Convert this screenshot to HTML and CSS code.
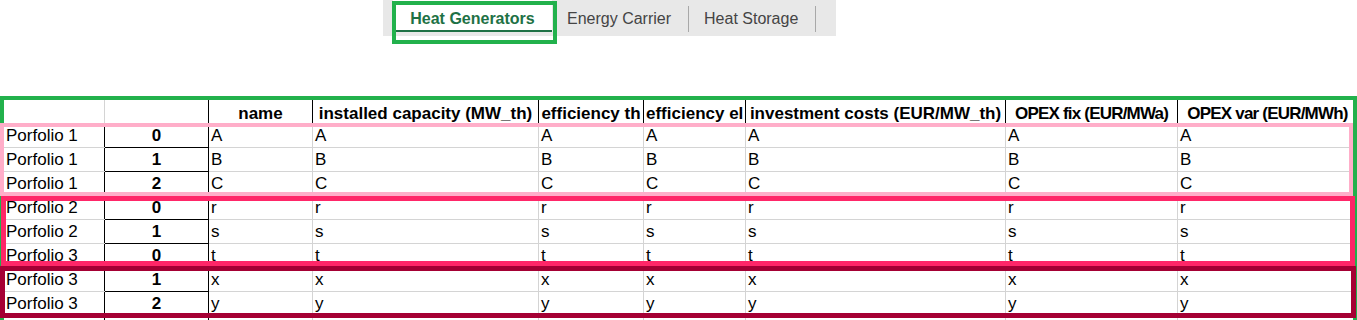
FILE: index.html
```html
<!DOCTYPE html>
<html lang="en">

<head>
    <meta charset="UTF-8">
    <title>Heat Generators</title>
    <link rel="stylesheet" href="styles.css">
</head>

<body>

    <div class="tabbar">
        <div class="tab active">Heat Generators</div>
        <div class="tab">Energy Carrier</div>
        <div class="tab">Heat Storage</div>
        <div class="mark mark-tab"></div>
    </div>

    <div class="sheet">
        <table class="grid">
            <colgroup>
                <col class="w-a">
                <col class="w-b">
                <col class="w-c">
                <col class="w-d">
                <col class="w-e">
                <col class="w-f">
                <col class="w-g">
                <col class="w-h">
                <col class="w-i">
            </colgroup>
            <thead>
                <tr>
                    <th class="corner"></th>
                    <th class="idx-head"></th>
                    <th>name</th>
                    <th>installed capacity (MW_th)</th>
                    <th>efficiency th</th>
                    <th>efficiency el</th>
                    <th>investment costs (EUR/MW_th)</th>
                    <th class="tight">OPEX fix (EUR/MWa)</th>
                    <th class="tight">OPEX var (EUR/MWh)</th>
                </tr>
            </thead>
            <tbody id="rows"></tbody>
        </table>

        <!-- highlight frames drawn over the grid -->
        <div class="mark mark-all"></div>
        <div class="mark mark-p1"></div>
        <div class="mark mark-p2"></div>
        <div class="mark mark-p3"></div>
    </div>

    <script>
        const data = [
            ['Porfolio 1', 0, 'A'],
            ['Porfolio 1', 1, 'B'],
            ['Porfolio 1', 2, 'C'],
            ['Porfolio 2', 0, 'r'],
            ['Porfolio 2', 1, 's'],
            ['Porfolio 3', 0, 't'],
            ['Porfolio 3', 1, 'x'],
            ['Porfolio 3', 2, 'y'],
            ['', '', '']
        ];

        const body = document.getElementById('rows');
        data.forEach(([portfolio, idx, val]) => {
            const tr = document.createElement('tr');
            let html = `<td class="label">${portfolio}</td><td class="idx">${idx}</td>`;
            for (let i = 0; i < 7; i++) {
                html += `<td>${val}</td>`;
            }
            tr.innerHTML = html;
            body.appendChild(tr);
        });
    </script>

</body>

</html>
```

FILE: styles.css
```css
body {
    margin: 0;
    font-family: "Liberation Sans", Arial, sans-serif;
    background-color: #fff;
    color: #000;
    overflow: hidden;
}

/* sheet tabs */
.tabbar {
    position: relative;
    display: flex;
    align-items: flex-start;
    margin-left: 383px;
    width: 453px;
    height: 36px;
    background-color: #e8e8e8;
}

.tab {
    font-size: 16px;
    color: #444;
    padding: 8px 18px 0 15px;
    line-height: 22px;
    height: 30px;
    box-sizing: border-box;
    position: relative;
}

.tab::after {
    content: "";
    position: absolute;
    right: 0;
    top: 6px;
    height: 26px;
    border-right: 1px solid #a8a8a8;
}

.tab:last-of-type {
    padding-left: 16px;
    padding-right: 20px;
}

.tab.active {
    margin-left: 10px;
    width: 159px;
    padding: 8px 0 0;
    text-align: center;
    height: 32px;
    background-color: #fff;
    color: #1e7145;
    font-weight: bold;
    border-bottom: 2px solid #1e7145;
}

.tab.active::after {
    right: -2px;
    height: 27px;
}

/* grid */
.sheet {
    position: relative;
    margin-top: 59px;
    padding-top: 4px;
    height: 221px;
    overflow: hidden;
}

.grid {
    border-collapse: collapse;
    table-layout: fixed;
    width: 1357px;
    font-size: 17px;
}

.w-a { width: 104px; }
.w-b { width: 104px; }
.w-c { width: 104px; }
.w-d { width: 226px; }
.w-e { width: 105px; }
.w-f { width: 102px; }
.w-g { width: 260px; }
.w-h { width: 172px; }
.w-i { width: 180px; }

.grid th,
.grid td {
    border: 1px solid #d4d4d4;
    white-space: nowrap;
    overflow: visible;
    padding: 0 2px;
}

.grid th {
    height: 18px;
    padding-top: 5px;
    line-height: 18px;
    font-weight: bold;
    text-align: center;
    border-right-color: #000;
}

.grid th.corner {
    border-right-color: #d4d4d4;
}

.grid th.tight {
    letter-spacing: -0.8px;
}

.grid td {
    height: 22px;
    padding-top: 1px;
    line-height: 22px;
    vertical-align: bottom;
}

.grid td.label {
    padding-left: 5px;
    border-right-color: #000;
}

.grid td.idx {
    text-align: center;
    font-weight: bold;
    border-right-color: #000;
    border-bottom-color: #000;
}

/* coloured frames */
.mark {
    position: absolute;
    box-sizing: border-box;
    pointer-events: none;
}

.mark-tab {
    left: 9px;
    top: 1px;
    width: 165px;
    height: 43px;
    border: 4px solid #22b14c;
}

.mark-all {
    left: 0;
    top: 1px;
    width: 1357px;
    height: 240px;
    border: 4px solid #22b14c;
}

.mark-p1 {
    left: 0;
    top: 28px;
    width: 1353px;
    height: 73px;
    border: 4px solid #ffaec9;
}

.mark-p2 {
    left: 1px;
    top: 101px;
    width: 1354px;
    height: 70px;
    border: 5px solid #ff2668;
}

.mark-p3 {
    left: 0;
    top: 171px;
    width: 1356px;
    height: 52px;
    border: 5px solid #a50034;
}
```
